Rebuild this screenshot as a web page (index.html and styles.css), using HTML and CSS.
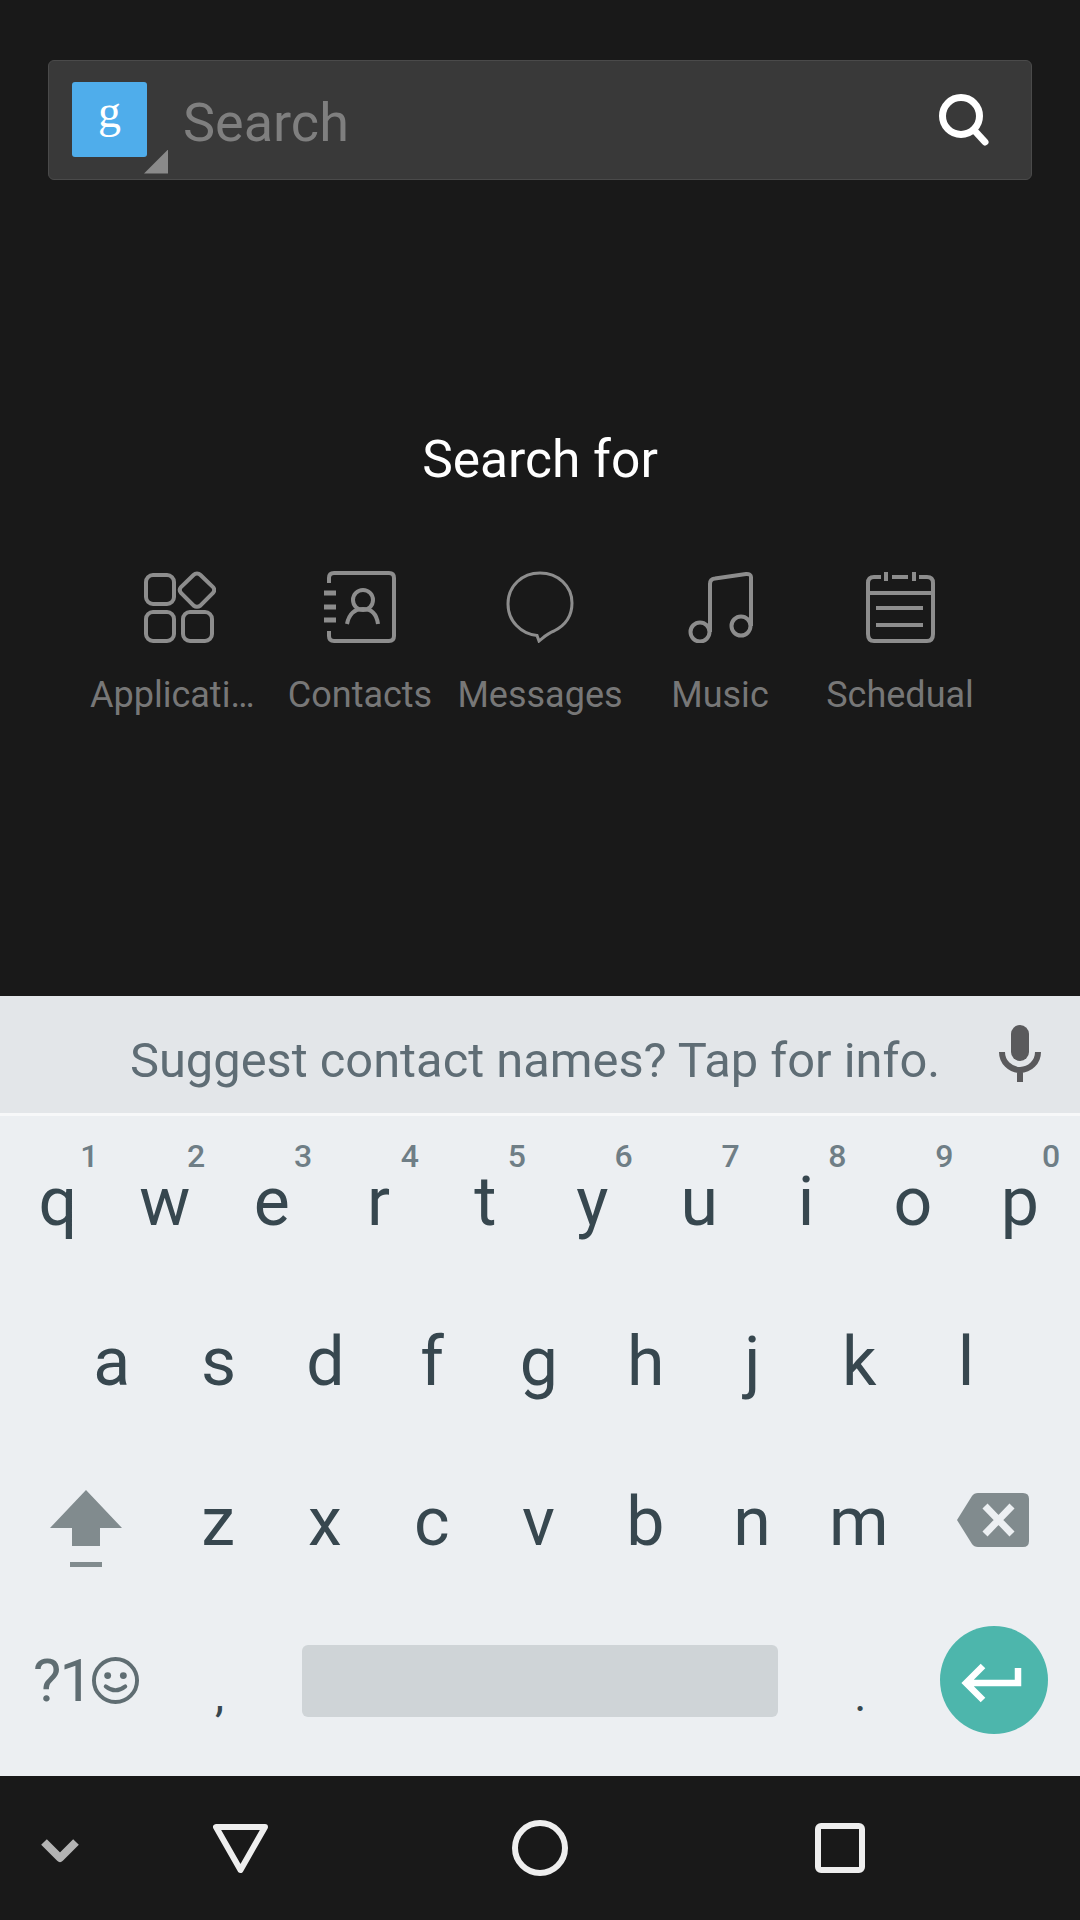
FILE: index.html
```html
<!DOCTYPE html>
<html>
<head>
    <title>Search</title>
    <link rel="stylesheet" href="styles.css">
</head>
<body>
    <main class="screen">
        <div class="search-bar">
            <div class="engine">
                <span class="engine-logo">g</span>
                <span class="engine-corner"></span>
            </div>
            <span class="search-hint">Search</span>
            <svg class="search-icon" viewBox="0 0 56 56">
                <circle cx="26" cy="24" r="18.500"></circle>
                <path d="M39 38 L50 50"></path>
            </svg>
        </div>

        <h2 class="search-title">Search for</h2>

        <div class="options">
            <div class="option">
                <svg class="option-icon" viewBox="0 0 72 72">
                    <rect x="2" y="4" width="28" height="29" rx="7"></rect>
                    <path d="M53 2.5 Q55 2.5 56.5 4 L69 16 Q71.500 19 69 22 L56.500 34.500 Q53 37 49.500 34.500 L37 22 Q34.500 19 37 16 L49.500 4 Q51 2.500 53 2.500 Z"></path>
                    <rect x="2" y="41" width="28" height="29" rx="7"></rect>
                    <rect x="39" y="41" width="29" height="29" rx="7"></rect>
                </svg>
                <span class="option-label option-label-long">Applicati…</span>
            </div>
            <div class="option">
                <svg class="option-icon" viewBox="0 0 72 72">
                    <path d="M5 12 V7 Q5 2 10 2 H65 Q70 2 70 7 V65 Q70 70 65 70 H10 Q5 70 5 65 V60"></path>
                    <path class="contact-tabs" d="M0 22 H12 M0 36 H12 M0 49 H12"></path>
                    <circle cx="39" cy="29" r="10"></circle>
                    <path d="M23 53 Q26 38 39 38 Q52 38 54 53"></path>
                </svg>
                <span class="option-label">Contacts</span>
            </div>
            <div class="option">
                <svg class="option-icon option-icon-thin" viewBox="0 0 72 72">
                    <path d="M33 64.500 C17 63 4 50 4 33 C4 15 18 2 36 2 C54 2 68 15 68 32 C68 46 60 55 50 60 C44 62 40 66 35 70 Z"></path>
                </svg>
                <span class="option-label">Messages</span>
            </div>
            <div class="option">
                <svg class="option-icon" viewBox="0 0 72 72">
                    <circle cx="16" cy="61" r="9.500"></circle>
                    <circle cx="57" cy="55" r="9.500"></circle>
                    <path d="M26 61 V13 Q26 8 31 7.500 L62 3 Q67 2.700 67 6 V55"></path>
                </svg>
                <span class="option-label">Music</span>
            </div>
            <div class="option">
                <svg class="option-icon" viewBox="0 0 72 72">
                    <path d="M17 6 H10 Q4 6 4 12 V63 Q4 70 10 70 H63 Q69 70 69 63 V12 Q69 6 63 6 H55 M28 6 H44 M22 1 V10 M50 1 V10 M4 22 H69 M12 37 H59 M12 54 H59"></path>
                </svg>
                <span class="option-label">Schedual</span>
            </div>
        </div>
    </main>

    <section class="keyboard">
        <div class="suggest">
            <span class="suggest-text">Suggest contact names? Tap for info.</span>
            <svg class="mic" viewBox="0 0 42 57">
                <rect x="12" y="0" width="18" height="36" rx="9"></rect>
                <path d="M3 27 a18 18 0 0 0 36 0 M21 46 V57"></path>
            </svg>
        </div>
        <div class="keys">
            <div class="row">
                <div class="key">q<sup>1</sup></div>
                <div class="key">w<sup>2</sup></div>
                <div class="key">e<sup>3</sup></div>
                <div class="key">r<sup>4</sup></div>
                <div class="key">t<sup>5</sup></div>
                <div class="key">y<sup>6</sup></div>
                <div class="key">u<sup>7</sup></div>
                <div class="key">i<sup>8</sup></div>
                <div class="key">o<sup>9</sup></div>
                <div class="key">p<sup>0</sup></div>
            </div>
            <div class="row row-home">
                <div class="key">a</div>
                <div class="key">s</div>
                <div class="key">d</div>
                <div class="key">f</div>
                <div class="key">g</div>
                <div class="key">h</div>
                <div class="key">j</div>
                <div class="key">k</div>
                <div class="key">l</div>
            </div>
            <div class="row row-shift">
                <div class="key">
                    <svg class="shift" viewBox="0 0 72 77">
                        <path d="M36 0 L72 38 H50 V56 H22 V38 H0 Z"></path>
                        <rect x="20" y="72" width="32" height="5"></rect>
                    </svg>
                </div>
                <div class="key">z</div>
                <div class="key">x</div>
                <div class="key">c</div>
                <div class="key">v</div>
                <div class="key">b</div>
                <div class="key">n</div>
                <div class="key">m</div>
                <div class="key">
                    <svg class="backspace" viewBox="0 0 72 54">
                        <path class="backspace-body" d="M0 27 L15 3 Q17 0 21 0 H66 Q72 0 72 6 V48 Q72 54 66 54 H21 Q17 54 15 51 Z"></path>
                        <path class="backspace-x" d="M28 13 L55 41 M55 13 L28 41"></path>
                    </svg>
                </div>
            </div>
            <div class="row row-bottom">
                <div class="key key-symbols">
                    <span>?1</span>
                    <svg class="smiley" viewBox="0 0 48 48">
                        <circle class="smiley-face" cx="24" cy="24" r="22"></circle>
                        <circle class="smiley-eye" cx="16" cy="19" r="3.500"></circle>
                        <circle class="smiley-eye" cx="32" cy="19" r="3.500"></circle>
                        <path class="smiley-face" d="M14 30 Q24 38 34 30"></path>
                    </svg>
                </div>
                <div class="key key-small">,</div>
                <div class="key"><div class="spacebar"></div></div>
                <div class="key key-small">.</div>
                <div class="key">
                    <div class="enter">
                        <svg class="enter-icon" viewBox="0 0 108 108">
                            <path d="M43 40 L26 57 L43 74 M26 57 H78 V42"></path>
                        </svg>
                    </div>
                </div>
            </div>
        </div>
    </section>

    <nav class="navbar">
        <svg class="nav-hide" viewBox="0 0 40 25"><path d="M4 4 L20 20 L36 4"></path></svg>
        <svg class="nav-back" viewBox="0 0 55 49"><path d="M3 3 H52 L27.500 46 Z"></path></svg>
        <svg class="nav-home" viewBox="0 0 56 56"><circle cx="28" cy="28" r="25"></circle></svg>
        <svg class="nav-recent" viewBox="0 0 50 50"><rect x="3" y="3" width="44" height="44" rx="3"></rect></svg>
    </nav>
</body>
</html>
```

FILE: styles.css
```css
* {
    box-sizing: border-box;
}

body {
    margin: 0;
    width: 1080px;
    height: 1920px;
    overflow: hidden;
    display: flex;
    flex-direction: column;
    background: #191919;
    font-family: "Roboto", "Liberation Sans", sans-serif;
}

.screen {
    height: 996px;
    padding: 60px 48px 0;
}

/* search bar */
.search-bar {
    height: 120px;
    display: flex;
    align-items: center;
    padding: 0 40px 0 23px;
    background: #393939;
    border: 1px solid #4a4a4a;
    border-radius: 6px;
}

.engine {
    position: relative;
    width: 75px;
    height: 75px;
    margin: 0 36px 2px 0;
}

.engine-logo {
    display: block;
    width: 75px;
    height: 75px;
    background: #4fadeb;
    border-radius: 3px;
    color: #fff;
    font-family: "Liberation Serif", serif;
    font-size: 46px;
    line-height: 60px;
    text-align: center;
}

.engine-corner {
    position: absolute;
    left: 72px;
    top: 68px;
    width: 24px;
    height: 24px;
    background: #8a8a8a;
    clip-path: polygon(100% 0, 100% 100%, 0 100%);
}

.search-hint {
    flex: 1;
    padding-top: 5px;
    font-size: 54px;
    color: #7f7f7f;
}

.search-icon {
    width: 56px;
    height: 56px;
    fill: none;
    stroke: #fff;
    stroke-width: 7;
    stroke-linecap: round;
}

/* search for */
.search-title {
    margin: 248px 0 0;
    font-size: 51.500px;
    font-weight: 400;
    line-height: 64px;
    color: #fff;
    text-align: center;
}

.options {
    display: grid;
    grid-template-columns: repeat(5, 180px);
    margin: 79px 42px 0;
}

.option {
    display: flex;
    flex-direction: column;
    align-items: center;
}

.option-icon {
    width: 72px;
    height: 72px;
    fill: none;
    stroke: #8d8d8d;
    stroke-width: 4;
}

.option-icon-thin {
    stroke-width: 3;
}

.contact-tabs {
    stroke-width: 5;
}

.option-label {
    width: 100%;
    margin-top: 30px;
    font-size: 36px;
    line-height: 44px;
    color: #777;
    text-align: center;
    white-space: nowrap;
}

.option-label-long {
    width: 164px;
    align-self: flex-start;
}

/* keyboard */
.keyboard {
    height: 780px;
    background: #eceff2;
}

.suggest {
    height: 120px;
    display: flex;
    align-items: center;
    padding: 0 39px 3px 130px;
    background: #e3e6e9;
    border-bottom: 3px solid #f7f8f9;
}

.suggest-text {
    flex: 1;
    padding-top: 14px;
    font-size: 48.800px;
    color: #5f6d75;
}

.mic {
    width: 42px;
    height: 57px;
    fill: #5a5a5c;
}

.mic path {
    fill: none;
    stroke: #5a5a5c;
    stroke-width: 6;
}

.keys {
    padding: 6px 6.700px 0 4.500px;
}

.row {
    display: grid;
    height: 160px;
    grid-template-columns: repeat(10, 1fr);
}

.row-home {
    grid-template-columns: repeat(9, 106.800px);
    justify-content: center;
}

.row-shift {
    grid-template-columns: 160.200px repeat(7, 106.800px) 160.200px;
}

.row-bottom {
    grid-template-columns: 160.200px 106.800px 534px 106.800px 160.200px;
    padding-left: 1.500px;
}

.key {
    position: relative;
    display: flex;
    align-items: center;
    justify-content: center;
    font-size: 68px;
    color: #37474f;
}

.key sup {
    position: absolute;
    top: 15px;
    right: 13px;
    font-size: 32px;
    font-weight: 500;
    line-height: 38px;
    color: #6f7e86;
}

.key-small {
    font-size: 46px;
    padding-top: 26px;
}

.key-symbols {
    gap: 1px;
    padding-bottom: 3px;
    font-size: 60px;
    letter-spacing: -2px;
    color: #5f6d72;
}

.shift {
    width: 72px;
    height: 77px;
    margin: 12px 0 0 2px;
    fill: #818b8e;
}

.backspace {
    width: 72px;
    height: 54px;
    margin: 0 0 4px 2px;
}

.backspace-body {
    fill: #818b8e;
}

.backspace-x {
    fill: none;
    stroke: #eceff2;
    stroke-width: 7;
}

.smiley {
    width: 47px;
    height: 47px;
}

.smiley-face {
    fill: none;
    stroke: #5f6d72;
    stroke-width: 4;
    stroke-linecap: round;
}

.smiley-eye {
    fill: #5f6d72;
}

.spacebar {
    width: 476px;
    height: 72px;
    margin-bottom: 2px;
    background: #cfd4d7;
    border-radius: 6px;
}

.enter {
    width: 108px;
    height: 108px;
    margin-bottom: 4px;
    border-radius: 50%;
    background: #4db6ac;
}

.enter-icon {
    display: block;
    fill: none;
    stroke: #fff;
    stroke-width: 6.500;
}

/* nav bar */
.navbar {
    height: 144px;
    display: grid;
    grid-template-columns: 120px 240px 360px 240px 120px;
    align-items: center;
    justify-items: center;
}

.navbar svg {
    fill: none;
    stroke: #eee;
    stroke-width: 6;
    stroke-linejoin: round;
}

.nav-hide {
    width: 40px;
    height: 25px;
    margin-top: 4px;
}

.navbar .nav-hide {
    stroke: #b4b4b4;
    stroke-width: 8;
}

.nav-back {
    width: 55px;
    height: 49px;
}

.nav-home {
    width: 56px;
    height: 56px;
}

.nav-recent {
    width: 50px;
    height: 50px;
}
```
